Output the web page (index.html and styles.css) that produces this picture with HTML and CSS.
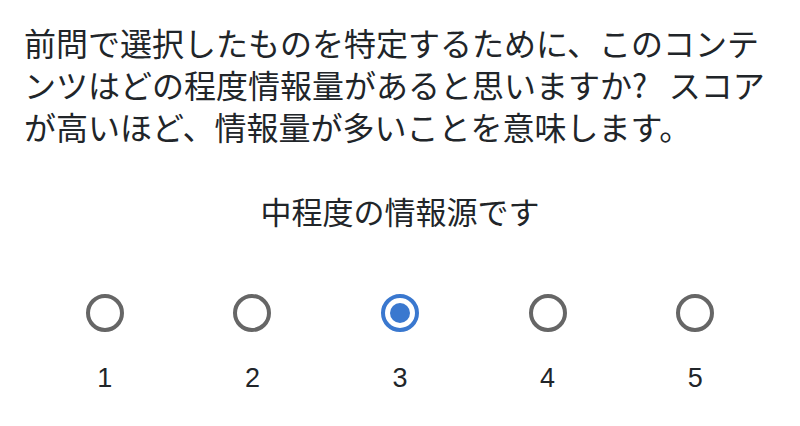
FILE: index.html
```html
<!DOCTYPE html>
<html lang="ja">
<head>
<meta charset="utf-8">
<link rel="stylesheet" href="styles.css">
</head>
<body>
<div class="question">
  <p class="prompt">前問で選択したものを特定するために、このコンテンツはどの程度情報量があると思いますか?&nbsp;&nbsp; スコアが高いほど、情報量が多いことを意味します。</p>
  <p class="caption">中程度の情報源です</p>
  <div class="scale">
    <label class="option"><span class="radio"></span><span class="num">1</span></label>
    <label class="option"><span class="radio"></span><span class="num">2</span></label>
    <label class="option"><span class="radio checked"></span><span class="num">3</span></label>
    <label class="option"><span class="radio"></span><span class="num">4</span></label>
    <label class="option"><span class="radio"></span><span class="num">5</span></label>
  </div>
</div>
</body>
</html>
```
FILE: styles.css
```css
html, body {
  margin: 0;
  padding: 0;
  background: #ffffff;
}
body {
  font-family: "Noto Sans CJK JP", "Noto Sans", sans-serif;
  color: #212529;
}
.question {
  padding: 21px 24px 0 24px;
}
.prompt {
  margin: 0;
  font-size: 32px;
  line-height: 42px;
  line-break: anywhere;
}
.caption {
  margin: 43px 0 0 0;
  font-size: 31px;
  line-height: 42px;
  text-align: center;
}
.scale {
  display: grid;
  grid-template-columns: repeat(5, 1fr);
  padding: 0 7px;
  margin-top: 62px;
}
.option {
  display: flex;
  flex-direction: column;
  align-items: center;
}
.radio {
  box-sizing: border-box;
  width: 38px;
  height: 38px;
  border: 4px solid #666666;
  border-radius: 50%;
  display: flex;
  align-items: center;
  justify-content: center;
}
.radio.checked {
  border-color: #3a78cf;
}
.radio.checked::after {
  content: "";
  width: 20px;
  height: 20px;
  border-radius: 50%;
  background: #3a78cf;
}
.num {
  margin-top: 31px;
  font-family: "Liberation Sans", Arial, sans-serif;
  font-size: 27px;
  line-height: 30px;
}
```
